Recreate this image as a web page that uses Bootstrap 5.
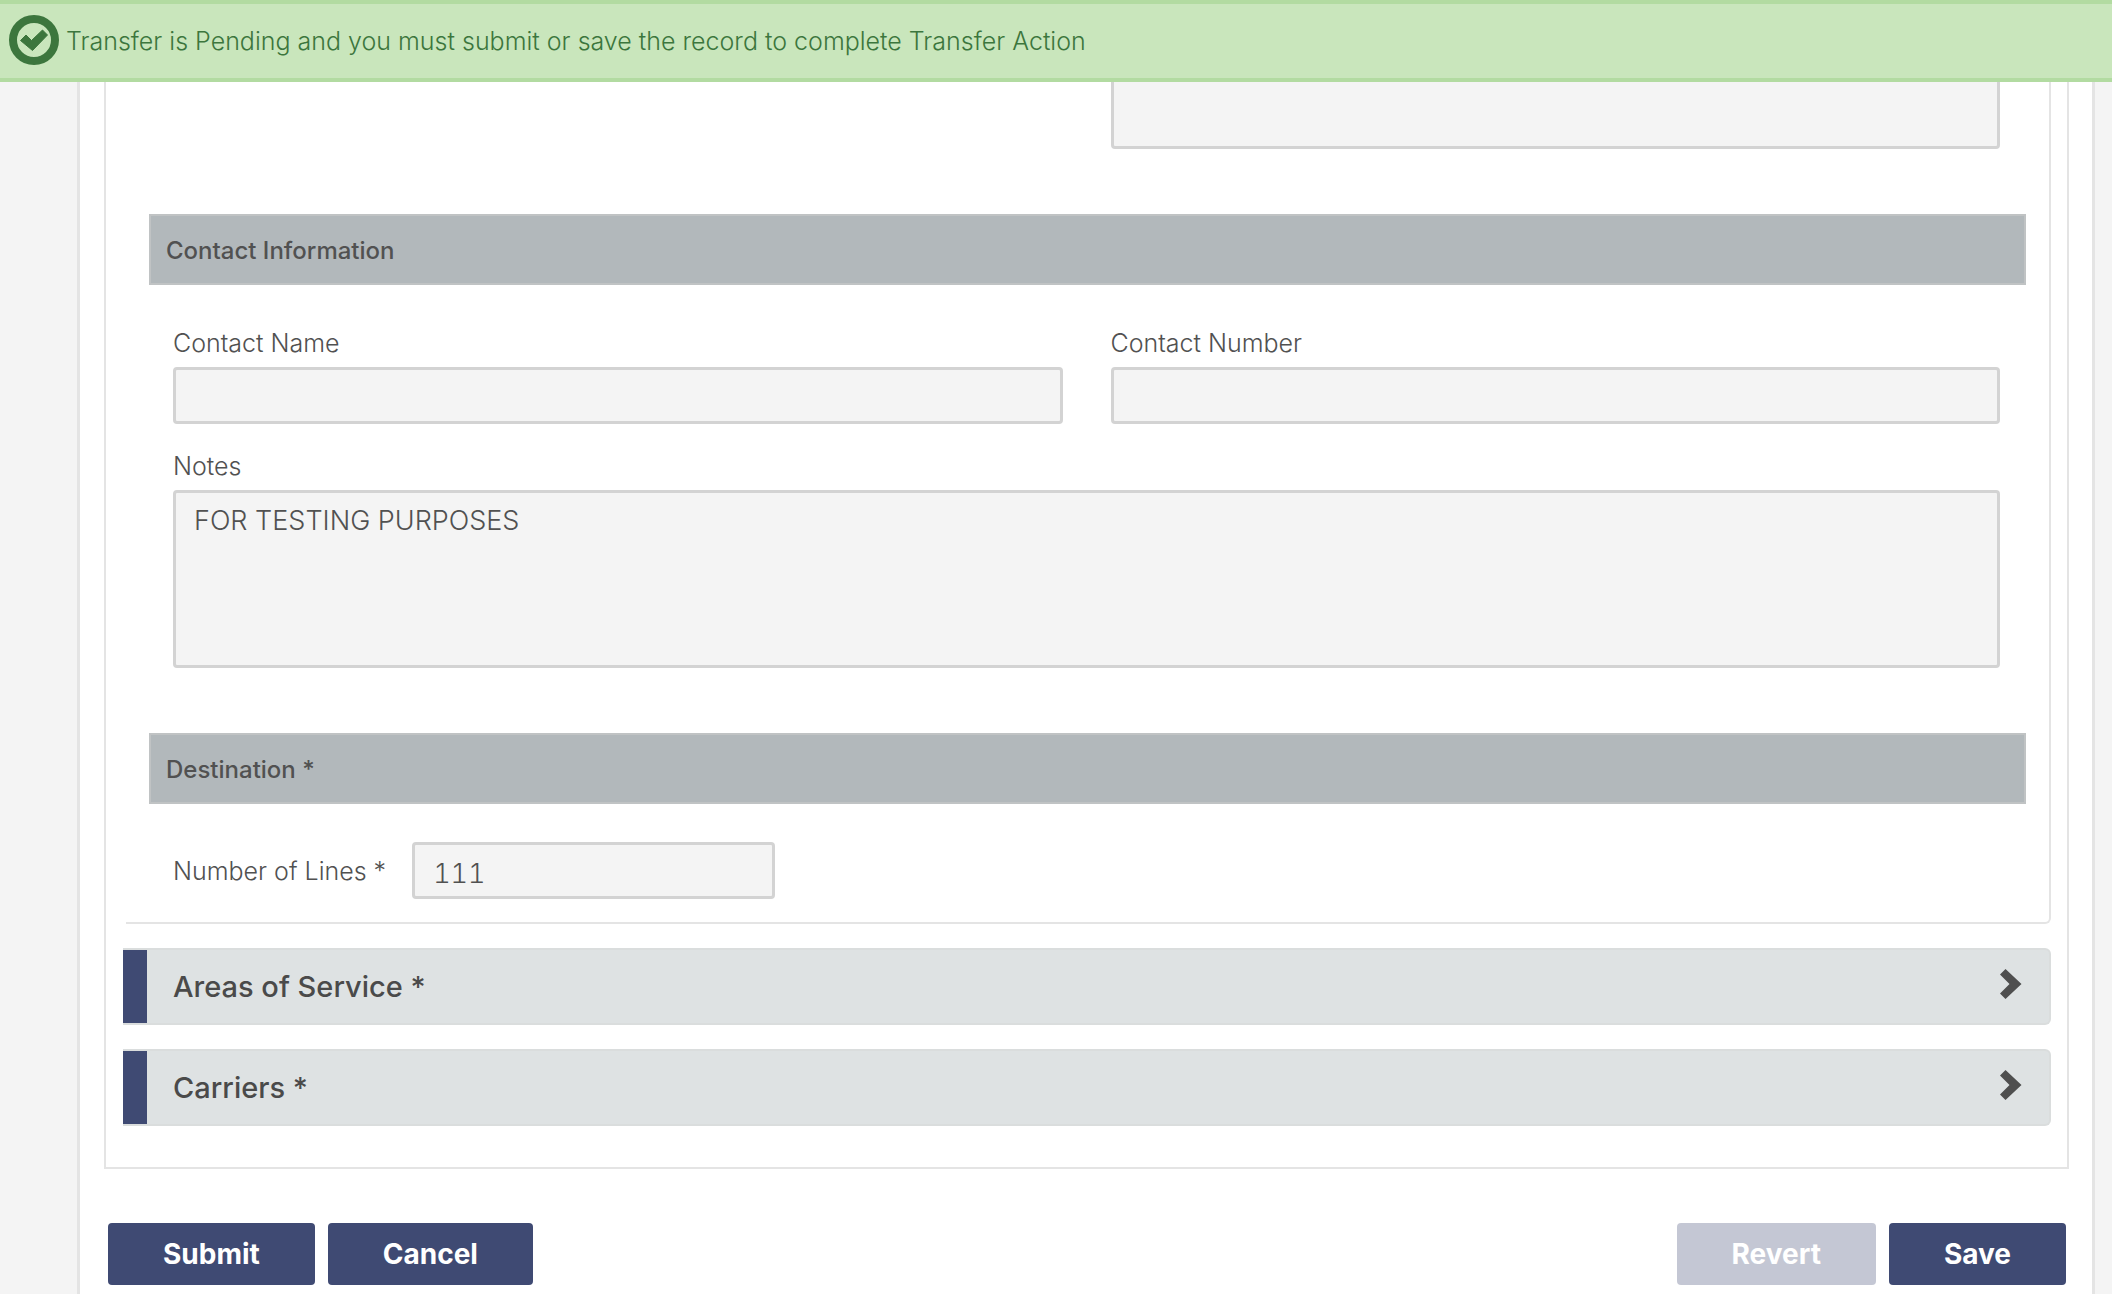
<!DOCTYPE html>
<html lang="en">
<head>
<meta charset="utf-8">
<meta name="viewport" content="width=device-width, initial-scale=1">
<title>Transfer Record</title>
<link href="https://cdn.jsdelivr.net/npm/bootstrap@5.3.0/dist/css/bootstrap.min.css" rel="stylesheet">
<style>
  :root { --brand: #3f4a73; --ink: #515151; --line: #e4e4e4; }
  body { background: #f4f4f4; color: var(--ink); font-family: Inter, "Liberation Sans", sans-serif; font-size: 25px; font-weight: 300; line-height: 32px; }
  .notice { height: 82px; padding: 0 8px; gap: 6px; background: #c9e6bc; border-top: 4px solid #b2dba1; border-bottom: 4px solid #b2dba1; color: #3c763d; }
  .notice svg { width: 52px; height: 52px; }
  .page-shell { margin: 0 17px 0 77px; padding: 0 23px 10px 24px; background: #fff; border: solid var(--line); border-width: 0 3px; min-height: 100vh; }
  .record-panel { border: 2px solid var(--line); border-top: 0; padding: 0 16px 41px 17px; }
  .open-section { margin-left: 3px; padding: 0 23px 23px; border: solid var(--line); border-width: 0 2px 2px 0; border-bottom-right-radius: 6px; }
  .fields { padding: 0 26px 0 24px; }
  .fields .row { --bs-gutter-x: 48px; }
  .fields.inline { gap: 26px; }
  .notes-col { padding-top: 26px; }
  .section-bar { margin: 65px 0 42px; height: 71px; padding: 3px 15px 0; background: #b2b8bb; border: 2px solid #c0c3c4; font-size: 24px; font-weight: 500; line-height: 32px; }
  .section-bar.tight { margin-bottom: 38px; }
  .form-label { margin-bottom: 8px; }
  .form-control, .form-control:disabled { height: 57px; padding: 10px 18px 4px; background: #f4f4f4; border: 3px solid #d3d3d3; border-radius: 4px; color: var(--ink); font-size: 27px; font-weight: 300; line-height: 36px; resize: none; box-shadow: none; }
  textarea.form-control:disabled { height: 178px; overflow: hidden; }
  textarea.form-control.short:disabled { height: 149px; }
  .form-control.count { width: 363px; font-variant-numeric: tabular-nums; }
  .fold { display: flex; align-items: center; width: 100%; margin-top: 24px; padding: 0 27px 0 0; height: 77px; background: #dee2e3; border: solid #dadddd; border-width: 2px 2px 2px 0; border-radius: 0 6px 6px 0; color: #4a4a4a; font-size: 29px; font-weight: 500; line-height: 36px; text-align: left; }
  .fold::before { content: ""; width: 24px; height: 73px; margin-right: 26px; background: var(--brand); }
  .fold svg { width: 22px; height: 30px; margin: 0 0 6px auto; }
  .actions { margin-top: 54px; padding: 0 3px 0 4px; gap: 13px; }
  .btn-brand { --bs-btn-bg: #3f4a73; --bs-btn-color: #fff; --bs-btn-hover-bg: #343e63; --bs-btn-hover-color: #fff; --bs-btn-disabled-bg: #3f4a73; --bs-btn-disabled-color: #fff; --bs-btn-disabled-opacity: .3; height: 62px; padding: 0 55px; border: 0; border-radius: 4px; font-size: 28px; font-weight: 700; line-height: 62px; }
</style>
<script src="https://cdn.jsdelivr.net/npm/bootstrap@5.3.0/dist/js/bootstrap.bundle.min.js"></script>
</head>
<body>
<div class="notice fixed-top d-flex align-items-center" role="alert">
  <svg viewBox="0 0 52 52" aria-hidden="true">
    <circle cx="26" cy="25" r="21" fill="none" stroke="#3c763d" stroke-width="8"/>
    <path d="M12.500 25.500 L18 20 L23.500 25.500 L34.500 15 L39.500 20 L24.500 35.500 Z" fill="#3c763d" stroke="#3c763d" stroke-linejoin="round"/>
  </svg>
  <span>Transfer is Pending and you must submit or save the record to complete Transfer Action</span>
</div>

<main class="page-shell">
  <form>
    <div class="record-panel">
      <section class="open-section">
        <div class="fields">
          <div class="row">
            <div class="col-6 offset-6"><textarea class="form-control short d-block" aria-label="Description" disabled></textarea></div>
          </div>
        </div>

        <h2 class="section-bar d-flex align-items-center">Contact Information</h2>
        <div class="fields">
          <div class="row">
            <div class="col-6">
              <label class="form-label d-block" for="contactName">Contact Name</label>
              <input class="form-control" id="contactName" type="text" disabled>
            </div>
            <div class="col-6">
              <label class="form-label d-block" for="contactNumber">Contact Number</label>
              <input class="form-control" id="contactNumber" type="text" disabled>
            </div>
            <div class="col-12 notes-col">
              <label class="form-label d-block" for="notes">Notes</label>
              <textarea class="form-control d-block" id="notes" disabled>FOR TESTING PURPOSES</textarea>
            </div>
          </div>
        </div>

        <h2 class="section-bar tight d-flex align-items-center">Destination *</h2>
        <div class="fields inline d-flex align-items-center">
          <label for="lineCount">Number of Lines *</label>
          <input class="form-control count" id="lineCount" type="text" value="111" disabled>
        </div>
      </section>

      <button class="fold" type="button">Areas of Service *
        <svg viewBox="0 0 22 30" aria-hidden="true"><path d="M0 5.500 L5.500 0 L21.500 15 L5.500 30 L0 24.500 L9.500 15 Z" fill="#4f4f4f"/></svg>
      </button>
      <button class="fold" type="button">Carriers *
        <svg viewBox="0 0 22 30" aria-hidden="true"><path d="M0 5.500 L5.500 0 L21.500 15 L5.500 30 L0 24.500 L9.500 15 Z" fill="#4f4f4f"/></svg>
      </button>
    </div>

    <div class="actions d-flex">
      <button class="btn btn-brand" type="submit">Submit</button>
      <button class="btn btn-brand" type="button">Cancel</button>
      <button class="btn btn-brand ms-auto" type="button" disabled>Revert</button>
      <button class="btn btn-brand" type="button">Save</button>
    </div>
  </form>
</main>
</body>
</html>
